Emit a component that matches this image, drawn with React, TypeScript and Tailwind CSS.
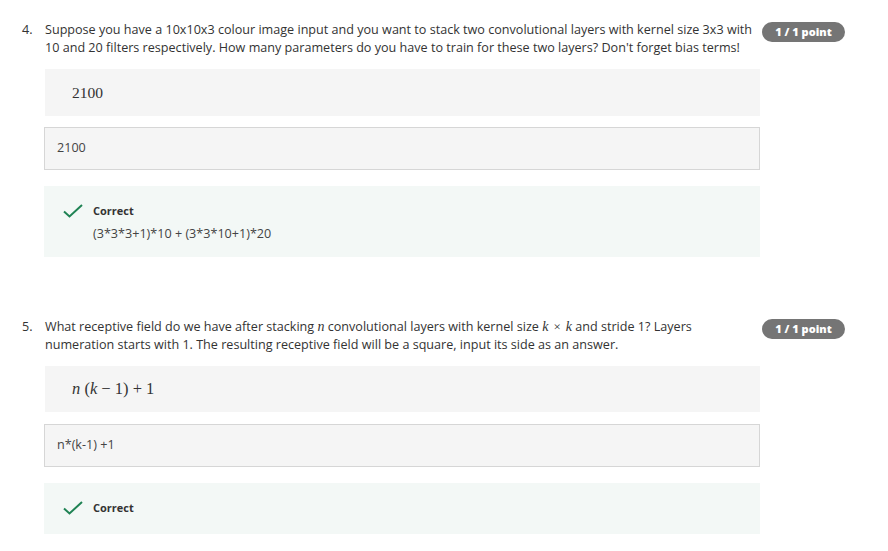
import React from "react";

const font = { fontFamily: '"Open Sans", "Liberation Sans", sans-serif' };

function Badge() {
  return (
    <div className="ml-[2px] mt-[1px] flex h-[20px] w-[83px] shrink-0 items-center justify-center rounded-full bg-[#757575] text-[11px] font-extrabold text-white">
      1 / 1 point
    </div>
  );
}

function Check() {
  return (
    <svg width="20" height="14" viewBox="0 0 20 14" className="shrink-0">
      <path d="M1 7.5 L6.5 12.5 L19 1" fill="none" stroke="#1f8354" strokeWidth="2" />
    </svg>
  );
}

const M = ({ children, i, s }: { children: React.ReactNode; i?: boolean; s?: string }) => (
  <span className={(i ? "italic " : "") + (s ?? "")} style={{ fontFamily: '"Liberation Serif", "DejaVu Serif", serif' }}>
    {children}
  </span>
);

export default function App() {
  return (
    <div className="min-h-[551px] w-[888px] bg-white pl-[22px] pt-[21px] text-[#333]" style={font}>
      {/* Question 4 */}
      <div className="flex">
        <div className="w-[23px] shrink-0 text-[12.6px] leading-[18px]">4.</div>
        <div className="w-[715px] shrink-0">
          <div className="text-[12.6px] leading-[18px] whitespace-nowrap">
            <div>Suppose you have a 10x10x3 colour image input and you want to stack two convolutional layers with kernel size 3x3 with</div>
            <div>10 and 20 filters respectively. How many parameters do you have to train for these two layers? Don't forget bias terms!</div>
          </div>
          <div className="mt-[12px] flex h-[47px] items-center bg-[#f5f5f5] pl-[27px] text-[15.5px]">
            <M>2100</M>
          </div>
          <div className="-ml-[1px] mt-[11px] flex h-[43px] items-center border border-[#d6d6d6] bg-[#f5f5f5] pl-[12px] text-[12.6px] text-[#444]">
            2100
          </div>
          <div className="-ml-[1px] mt-[16px] h-[71px] bg-[#f3f8f6] pl-[19px] pt-[17px]">
            <div className="flex items-center">
              <Check />
              <span className="ml-[10px] text-[11px] font-bold leading-[16px] text-[#333]">Correct</span>
            </div>
            <div className="ml-[30px] mt-[6px] text-[12.6px] leading-[18px] text-[#444]">(3*3*3+1)*10 + (3*3*10+1)*20</div>
          </div>
        </div>
        <Badge />
      </div>

      {/* Question 5 */}
      <div className="mt-[61px] flex">
        <div className="w-[23px] shrink-0 text-[12.6px] leading-[18px]">5.</div>
        <div className="w-[715px] shrink-0">
          <div className="text-[12.6px] leading-[18px] whitespace-nowrap">
            <div>
              What receptive field do we have after stacking <M i s="text-[14px]">n</M> convolutional layers with kernel size{" "}
              <M i s="text-[14px]">k</M>
              <M s="text-[13px] mx-[5px]">×</M>
              <M i s="text-[14px]">k</M> and stride 1? Layers
            </div>
            <div>numeration starts with 1. The resulting receptive field will be a square, input its side as an answer.</div>
          </div>
          <div className="mt-[12px] flex h-[46px] items-center bg-[#f5f5f5] pl-[27px] text-[16.5px]">
            <M i>n</M>
            <M>&nbsp;(</M>
            <M i>k</M>
            <M>&nbsp;−&nbsp;1)&nbsp;+&nbsp;1</M>
          </div>
          <div className="-ml-[1px] mt-[12px] flex h-[43px] items-center border border-[#d6d6d6] bg-[#f5f5f5] pl-[12px] text-[12.6px] text-[#444]">
            n*(k-1) +1
          </div>
          <div className="-ml-[1px] mt-[16px] h-[51px] bg-[#f3f8f6] pl-[19px] pt-[17px]">
            <div className="flex items-center">
              <Check />
              <span className="ml-[10px] text-[11px] font-bold leading-[16px] text-[#333]">Correct</span>
            </div>
          </div>
        </div>
        <Badge />
      </div>
    </div>
  );
}
